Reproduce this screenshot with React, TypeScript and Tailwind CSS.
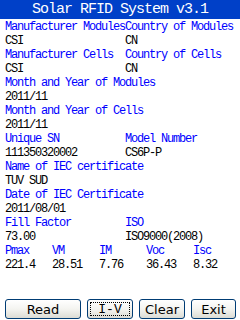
import React from "react";

const mono = { fontFamily: '"Liberation Mono", "DejaVu Sans Mono", monospace' };

interface FieldRow {
  left: [string, string];
  right?: [string, string];
}

const rows: FieldRow[] = [
  { left: ["Manufacturer Modules", "CSI"], right: ["Country of Modules", "CN"] },
  { left: ["Manufacturer Cells", "CSI"], right: ["Country of Cells", "CN"] },
  { left: ["Month and Year of Modules", "2011/11"] },
  { left: ["Month and Year of Cells", "2011/11"] },
  { left: ["Unique SN", "111350320002"], right: ["Model Number", "CS6P-P"] },
  { left: ["Name of IEC certificate", "TUV SUD"] },
  { left: ["Date of IEC Certificate", "2011/08/01"] },
  { left: ["Fill Factor", "73.00"], right: ["ISO", "ISO9000(2008)"] },
];

const electrical = [
  ["Pmax", "221.4"],
  ["VM", "28.51"],
  ["IM", "7.76"],
  ["Voc", "36.43"],
  ["Isc", "8.32"],
];

function XpButton({ label, width, focused = false }: { label: string; width: string; focused?: boolean }) {
  return (
    <button
      className={`${width} h-[20px] rounded-[3px] border border-[#003c74] bg-gradient-to-b from-white via-[#f4f4f0] to-[#dcdcd4] flex items-center justify-center p-[2px]`}
    >
      <span
        className={`flex-1 h-full flex items-center justify-center text-[13px] leading-none text-black ${
          focused ? "border border-dotted border-black" : ""
        }`}
        style={focused ? mono : { fontFamily: '"DejaVu Sans", "Liberation Sans", sans-serif' }}
      >
        {label}
      </span>
    </button>
  );
}

export default function App() {
  return (
    <div className="w-[240px] h-[320px] bg-white flex flex-col overflow-hidden">
      <div
        className="h-[19px] bg-[#0040c8] text-white text-[15px] leading-[19px] tracking-[-1px] text-center"
        style={mono}
      >
        Solar RFID System v3.1
      </div>

      <div className="pt-[1px] pl-[5px] text-[12px] leading-[14px] tracking-[-1.2px]" style={mono}>
        {rows.map((r, i) => (
          <div key={i}>
            <div className="flex text-[#0000ff]">
              <span className="w-[120px] whitespace-nowrap">{r.left[0]}</span>
              {r.right && <span className="whitespace-nowrap">{r.right[0]}</span>}
            </div>
            <div className="flex text-black">
              <span className="w-[120px] whitespace-nowrap">{r.left[1]}</span>
              {r.right && <span className="whitespace-nowrap">{r.right[1]}</span>}
            </div>
          </div>
        ))}
        <div className="flex text-[#0000ff]">
          {electrical.map(([k]) => (
            <span key={k} className="w-[47px]">{k}</span>
          ))}
        </div>
        <div className="flex text-black">
          {electrical.map(([k, v]) => (
            <span key={k} className="w-[47px]">{v}</span>
          ))}
        </div>
      </div>

      <div className="mt-auto mb-[1px] flex items-center pl-[5px] gap-[6px]">
        <XpButton label="Read" width="w-[76px]" />
        <XpButton label="I-V" width="w-[46px]" focused />
        <XpButton label="Clear" width="w-[46px]" />
        <XpButton label="Exit" width="w-[45px]" />
      </div>
    </div>
  );
}
